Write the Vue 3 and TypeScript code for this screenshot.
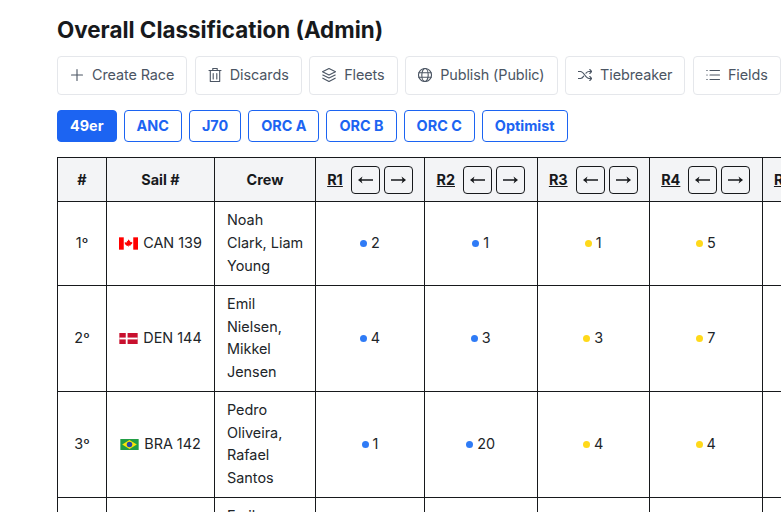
<script setup lang="ts">
const actions = [
  { label: 'Create Race', icon: 'plus' },
  { label: 'Discards', icon: 'trash' },
  { label: 'Fleets', icon: 'layers' },
  { label: 'Publish (Public)', icon: 'globe' },
  { label: 'Tiebreaker', icon: 'shuffle' },
  { label: 'Fields', icon: 'list' },
]

const fleets = ['49er', 'ANC', 'J70', 'ORC A', 'ORC B', 'ORC C', 'Optimist']

const races = ['R1', 'R2', 'R3', 'R4', 'R5']

const rows = [
  {
    pos: '1º',
    flag: 'can',
    sail: 'CAN 139',
    crew: 'Noah Clark, Liam Young',
    scores: [['blue', '2'], ['blue', '1'], ['gold', '1'], ['gold', '5'], ['gold', '3']],
  },
  {
    pos: '2º',
    flag: 'den',
    sail: 'DEN 144',
    crew: 'Emil Nielsen, Mikkel Jensen',
    scores: [['blue', '4'], ['blue', '3'], ['gold', '3'], ['gold', '7'], ['gold', '2']],
  },
  {
    pos: '3º',
    flag: 'bra',
    sail: 'BRA 142',
    crew: 'Pedro Oliveira, Rafael Santos',
    scores: [['blue', '1'], ['blue', '20'], ['gold', '4'], ['gold', '4'], ['gold', '6']],
  },
  {
    pos: '4º',
    flag: '',
    sail: '',
    crew: 'Emil Larsen, Oskar Lund',
    scores: [['blue', ''], ['blue', ''], ['gold', ''], ['gold', ''], ['gold', '']],
  },
]
</script>

<template>
  <div class="page">
    <h1 class="page-title">Overall Classification (Admin)</h1>

    <div class="actions">
      <button v-for="action in actions" :key="action.label" class="action-button" type="button">
        <svg class="action-icon" viewBox="1 1 14 14" fill="none" stroke="currentColor" stroke-width="1.1" stroke-linecap="round" stroke-linejoin="round">
          <path v-if="action.icon === 'plus'" d="M8 2.500v11M2.500 8h11" />
          <template v-else-if="action.icon === 'trash'">
            <path d="M2 3.500h12M5.800 3.500V1.500h4.400v2M3.300 3.500v11h9.400v-11" />
            <path d="M6.200 6.500v5.500M9.800 6.500v5.500" />
          </template>
          <template v-else-if="action.icon === 'layers'">
            <path d="M8 1.500l6.500 3.200L8 7.900 1.500 4.700z" />
            <path d="M1.800 8L8 11l6.200-3M1.800 11.200L8 14.500l6.200-3.300" />
          </template>
          <template v-else-if="action.icon === 'globe'">
            <circle cx="8" cy="8" r="6.500" />
            <ellipse cx="8" cy="8" rx="3.200" ry="6.500" />
            <path d="M1.800 5.800h12.400M1.800 10.200h12.400" />
          </template>
          <template v-else-if="action.icon === 'shuffle'">
            <path d="M1.200 4.500h2.300c3.500 0 5 7 8.500 7h2.800M1.200 11.500h2.300c1.400 0 2.400-1.100 3.200-2.400M9 6.200c.8-1 1.700-1.700 3-1.700h2.800" />
            <path d="M12.800 2.500l2 2-2 2M12.800 9.500l2 2-2 2" />
          </template>
          <path v-else d="M5 3.500h9.500M5 8h9.500M5 12.500h9.500M1.800 3.500h.4M1.800 8h.4M1.800 12.500h.4" />
        </svg>
        <span>{{ action.label }}</span>
      </button>
    </div>

    <div class="fleets">
      <button
        v-for="(fleet, index) in fleets"
        :key="fleet"
        class="fleet-button"
        :class="{ 'fleet-button--active': index === 0 }"
        type="button"
      >
        {{ fleet }}
      </button>
    </div>

    <table class="results">
      <colgroup>
        <col class="col-pos" />
        <col class="col-sail" />
        <col class="col-crew" />
        <col class="col-r1" />
        <col class="col-r" />
        <col class="col-r" />
        <col class="col-r" />
        <col class="col-r" />
      </colgroup>
      <thead>
        <tr>
          <th>#</th>
          <th>Sail #</th>
          <th>Crew</th>
          <th v-for="race in races" :key="race">
            <span class="race-head">
              <a class="race-link">{{ race }}</a>
              <span class="move-buttons">
                <button class="move-button" type="button" aria-label="Move left">
                  <svg class="move-arrow" viewBox="0 0 15 8"><path d="M0 4l4.500-3.500-1 2.800H15v1.400H3.500l1 2.800z" /></svg>
                </button>
                <button class="move-button" type="button" aria-label="Move right">
                  <svg class="move-arrow" viewBox="0 0 15 8"><path d="M15 4l-4.500-3.500 1 2.800H0v1.400h11.500l-1 2.800z" /></svg>
                </button>
              </span>
            </span>
          </th>
        </tr>
      </thead>
      <tbody>
        <tr v-for="row in rows" :key="row.pos">
          <td class="center">{{ row.pos }}</td>
          <td class="center nowrap">
            <svg v-if="row.flag === 'can'" class="flag flag--tall" viewBox="0 0 20 13">
              <rect width="20" height="13" fill="#fff" />
              <rect width="5" height="13" fill="#f00" />
              <rect x="15" width="5" height="13" fill="#f00" />
              <path d="M10 2l.9 1.700.9-.4-.3 2 1.200-.8.3.7 1.100-.2-.4 1.300.5.300-2.200 1.500.2.800-2-.3v1.500h-.4V8.900l-2 .3.200-.8-2.200-1.500.5-.3-.4-1.300 1.100.2.300-.7 1.200.8-.3-2 .9.400z" fill="#f00" />
            </svg>
            <svg v-else-if="row.flag === 'den'" class="flag" viewBox="0 0 20 12">
              <rect width="20" height="12" fill="#c8102e" />
              <rect x="7" width="2" height="12" fill="#fff" />
              <rect y="5" width="20" height="2" fill="#fff" />
            </svg>
            <svg v-else-if="row.flag === 'bra'" class="flag" viewBox="0 0 20 12">
              <rect width="20" height="12" fill="#229e45" />
              <path d="M10 1.200L18 6l-8 4.800L2 6z" fill="#f8e509" />
              <circle cx="10" cy="6" r="3" fill="#2b49a3" />
            </svg>
            {{ row.sail }}
          </td>
          <td class="crew">{{ row.crew }}</td>
          <td v-for="(score, i) in row.scores" :key="i" class="center nowrap">
            <template v-if="score[1]">
              <span class="dot" :class="'dot--' + score[0]"></span>{{ score[1] }}
            </template>
          </td>
        </tr>
      </tbody>
    </table>
  </div>
</template>

<style scoped>
.page {
  width: 900px;
  padding: 16px 0 0 57px;
  box-sizing: border-box;
  color: #212529;
  font-family: Inter, "Liberation Sans", sans-serif;
  font-size: 14.4px;
  line-height: 1.6;
}

.page-title {
  margin: 0 0 12px;
  color: #17191c;
  font-size: 22.4px;
  font-weight: 700;
  line-height: 28px;
}

.actions {
  display: flex;
  gap: 7.500px;
  margin-bottom: 15px;
}

.action-button {
  height: 39px;
  padding: 0 12px 2px;
  display: flex;
  align-items: center;
  flex-shrink: 0;
  gap: 8px;
  border: 1px solid #e5e7eb;
  border-radius: 4px;
  background: #fff;
  color: #4b5563;
  font: inherit;
  letter-spacing: -0.08px;
  white-space: nowrap;
}

.action-icon {
  width: 14px;
  height: 14px;
  flex-shrink: 0;
}

.fleets {
  display: flex;
  gap: 7px;
  margin-bottom: 15px;
}

.fleet-button {
  height: 32px;
  padding: 0 12px;
  border: 1px solid #1c64f2;
  border-radius: 4px;
  background: #fff;
  color: #1c64f2;
  font: inherit;
  font-weight: 700;
}

.fleet-button--active {
  background: #1c64f2;
  color: #fff;
}

.results {
  width: 818px;
  table-layout: fixed;
  border-collapse: collapse;
}

.col-pos { width: 49px; }
.col-sail { width: 108px; }
.col-crew { width: 101px; }
.col-r1 { width: 109px; }
.col-r { width: 112.500px; }

.results th,
.results td {
  box-sizing: border-box;
  border: 1px solid #17191c;
}

.results th {
  height: 44px;
  padding: 0 4px;
  background: #f3f4f6;
  color: #17191c;
  font-weight: 700;
  text-align: center;
}

.results td {
  height: 84px;
  padding: 7px 12px;
}

.race-head {
  display: flex;
  align-items: center;
  justify-content: center;
  gap: 8px;
}

.race-link {
  text-decoration: underline;
}

.move-buttons {
  display: flex;
  gap: 4px;
}

.move-button {
  width: 29px;
  height: 28px;
  padding: 0;
  display: flex;
  align-items: center;
  justify-content: center;
  border: 1px solid #17191c;
  border-radius: 4px;
  background: transparent;
  color: #17191c;
}

.move-arrow {
  width: 15px;
  height: 8px;
  fill: currentColor;
}

.results td.center {
  padding: 6px 12px 8px;
  text-align: center;
}

.nowrap {
  white-space: nowrap;
}

.results td.crew {
  padding-right: 10px;
  line-height: 22.700px;
}

.flag {
  width: 19px;
  height: 11px;
  margin-right: 1px;
  vertical-align: -1px;
}

.flag--tall {
  height: 13px;
  vertical-align: -2px;
}

.dot {
  display: inline-block;
  width: 7px;
  height: 7px;
  margin-right: 4px;
  border-radius: 50%;
  vertical-align: 1px;
}

.dot--blue {
  background: #2f7bf6;
}

.dot--gold {
  background: #ffd91a;
}
</style>

<style>
html,
body {
  overflow: hidden;
  background: #fff;
}
</style>
